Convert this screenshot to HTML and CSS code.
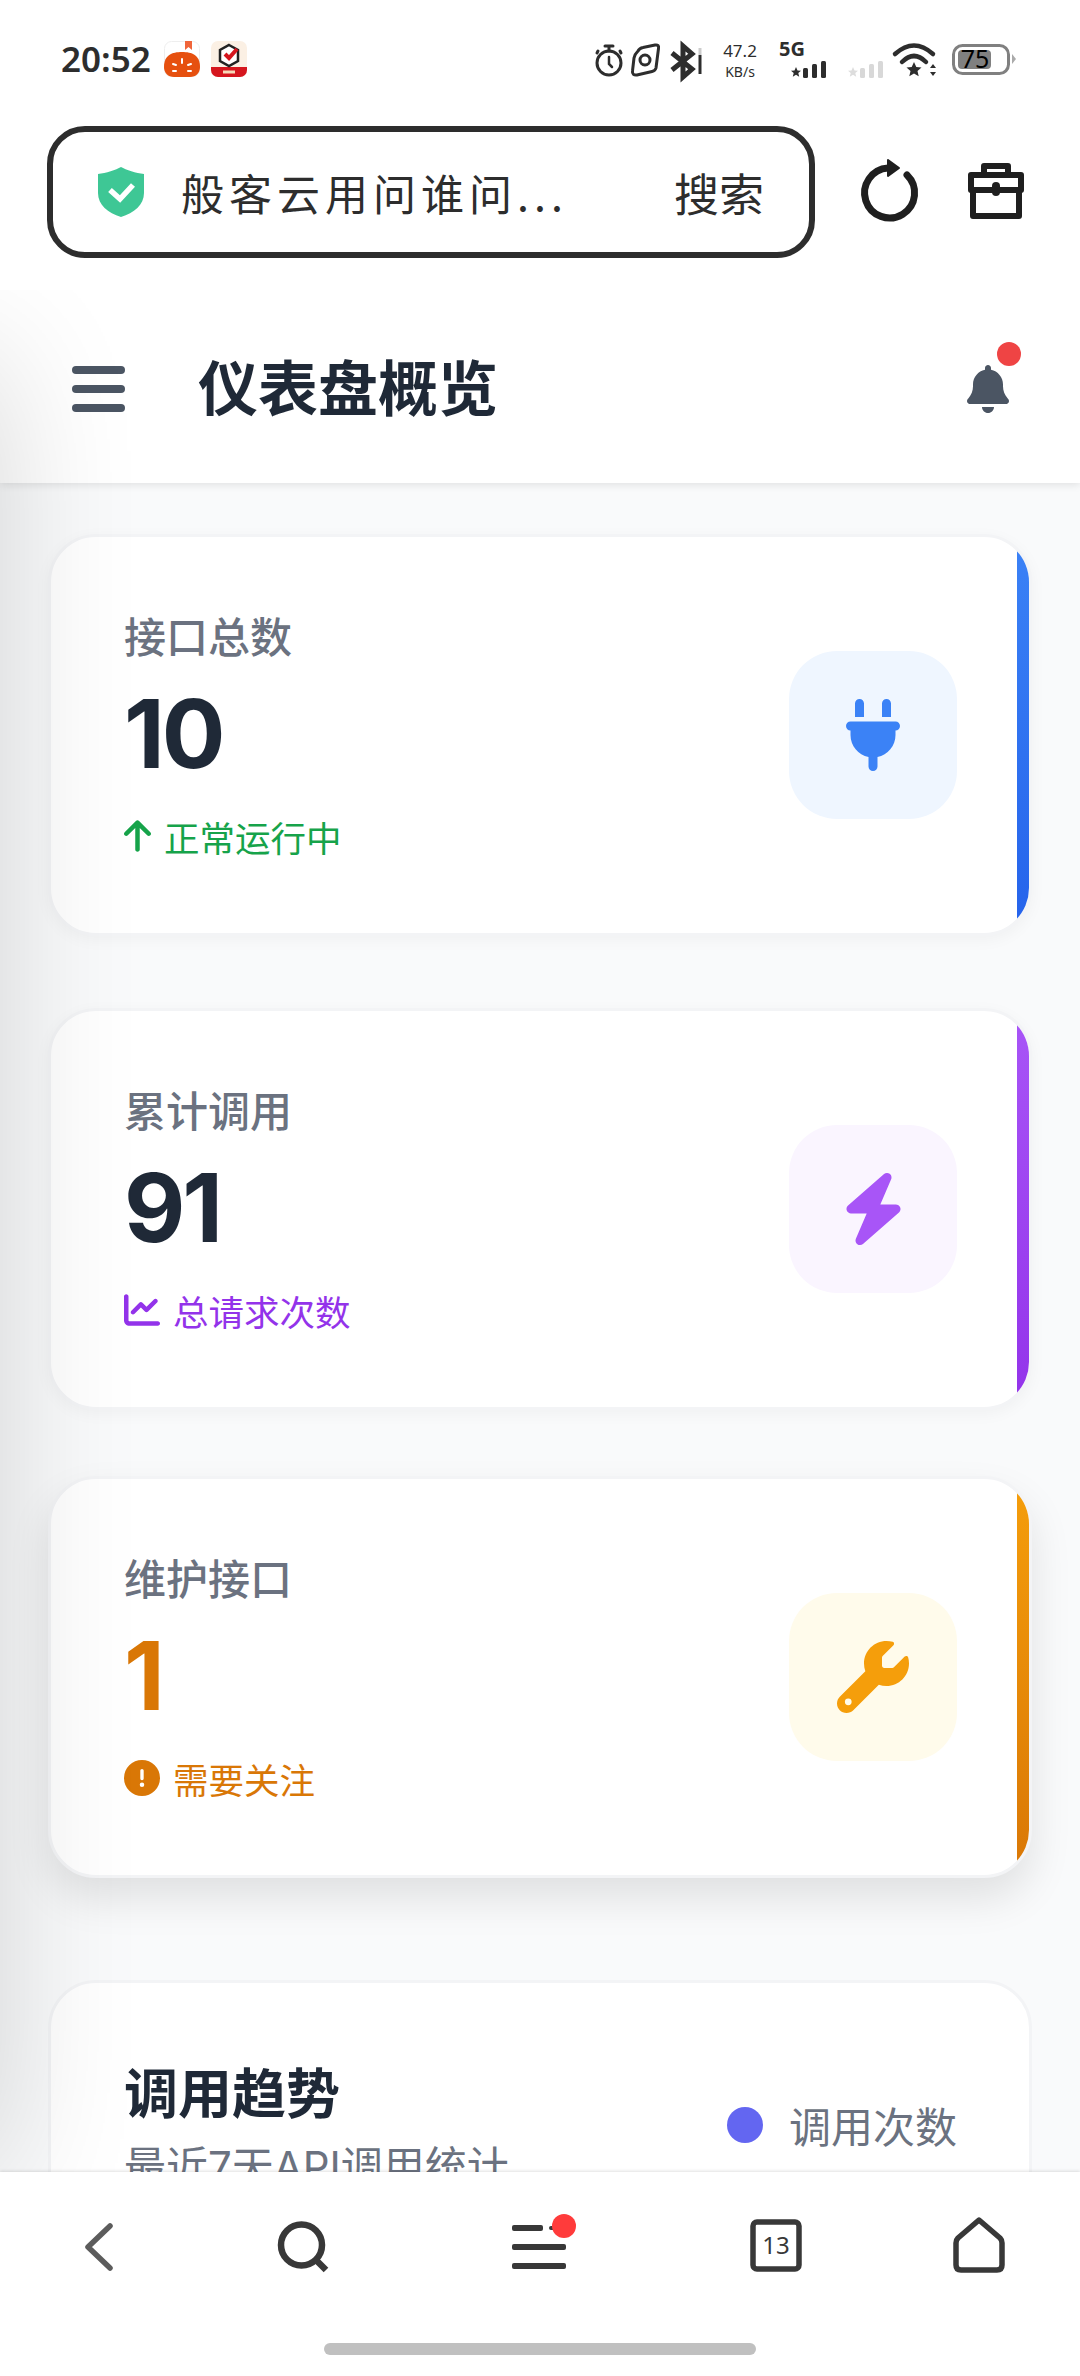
FILE: index.html
```html
<!DOCTYPE html>
<html lang="zh-CN">
<head>
    <meta charset="UTF-8">
    <meta name="viewport" content="width=device-width, initial-scale=1.0">
    <title>仪表盘概览</title>
    <link rel="stylesheet" href="styles.css">
</head>
<body>
<div class="screen">
    <!-- Status bar -->
    <div class="status-bar">
        <span class="clock">20:52</span>
        <svg class="app-icon first" viewBox="0 0 36 36">
            <rect x="0.5" y="0.5" width="35" height="35" rx="7" fill="#fff" stroke="#eee"/>
            <path d="M0 26C0 14 8 11 18 11s18 3 18 15c0 6-4 10-10 10H10C4 36 0 32 0 26z" fill="#e6500f"/>
            <path d="M21 0h7v9l-3.500-3-3.500 3z" fill="#f0653a"/>
            <path d="M9 23l3 1M18 18v4M27 23l-3 1M9 30h3M24 30h3" stroke="#fff" stroke-width="2" stroke-linecap="round"/>
        </svg>
        <svg class="app-icon" viewBox="0 0 36 36">
            <rect width="36" height="36" rx="7" fill="#fbf0e4"/>
            <path d="M0 26h36v3a7 7 0 0 1-7 7H7a7 7 0 0 1-7-7z" fill="#d5161e"/>
            <path d="M18 4l9 5v11l-9 5-9-5V9z" fill="#fff" stroke="#222" stroke-width="2.500"/>
            <path d="M14 13l4 4 8-9" fill="none" stroke="#d5161e" stroke-width="4"/>
            <path d="M12 31h12" stroke="#f6d9b8" stroke-width="3"/>
        </svg>

        <div class="status-right">
            <svg class="st-timer" viewBox="0 0 28 40" fill="none" stroke="#2d2d2d" stroke-width="3" stroke-linecap="round">
                <circle cx="14" cy="22" r="12"/>
                <path d="M10 5h8M14 5v5M25 10l1 2M3 10l-1 2"/>
                <path d="M14 16v7l3 3" stroke-width="2.500"/>
            </svg>
            <svg class="st-lens" viewBox="0 0 30 40" fill="none" stroke="#2d2d2d" stroke-width="3">
                <path d="M8 10c1-2 2-3 5-3.500L25 4c3-.5 4 1 3.500 3.500L26 27c-.5 2-2 3-4 3.500L7 34c-3 .5-5-1-4.500-4L4 17c.5-3 2-5 4-7z"/>
                <circle cx="15" cy="19" r="5"/>
            </svg>
            <svg class="st-bt" viewBox="0 0 31 40" fill="none" stroke="#2d2d2d" stroke-width="5">
                <path d="M1 12l20 16-9 8V5l9 8L1 29"/>
                <path d="M29 7v7" stroke="#ccc" stroke-width="3"/>
                <path d="M29 14v19" stroke-width="3"/>
            </svg>
            <div class="speed"><span>47.2</span><small>KB/s</small></div>
            <svg class="st-cell" viewBox="0 0 47 40">
                <text class="cell-label" x="0" y="15">5G</text>
                <path d="M17 26l1.500 3.500 3.500.3-2.700 2.300.9 3.600-3.200-2-3.200 2 .9-3.600-2.700-2.300 3.500-.3z" fill="#2d2d2d"/>
                <rect x="24" y="27" width="5" height="10" rx="1.500" fill="#2d2d2d"/>
                <rect x="33" y="23" width="5" height="14" rx="1.500" fill="#2d2d2d"/>
                <rect x="42" y="20" width="5" height="17" rx="1.500" fill="#2d2d2d"/>
            </svg>
            <svg class="st-cell2" viewBox="0 0 36 40">
                <path d="M6 26l1.500 3.500 3.500.3-2.700 2.300.9 3.600-3.200-2-3.200 2 .9-3.600-2.700-2.300 3.500-.3z" fill="#ddd"/>
                <rect x="13" y="27" width="5" height="10" rx="1.500" fill="#d8d8d8"/>
                <rect x="22" y="23" width="5" height="14" rx="1.500" fill="#d8d8d8"/>
                <rect x="31" y="20" width="5" height="17" rx="1.500" fill="#d8d8d8"/>
            </svg>
            <svg class="st-wifi" viewBox="0 0 44 40" fill="none" stroke="#2d2d2d" stroke-width="4.500" stroke-linecap="round">
                <path d="M2 13Q21-4 40 13"/>
                <path d="M9 21Q21 9 33 21"/>
                <path d="M21 21l2.300 5 5.200.5-4 3.500 1.200 5.300-4.700-2.800-4.700 2.800 1.200-5.300-4-3.500 5.200-.5z" fill="#2d2d2d" stroke="none"/>
                <path d="M37 27l3-4 3 4zM37 31l3 4 3-4z" fill="#2d2d2d" stroke="none"/>
            </svg>
            <svg class="st-battery" viewBox="0 0 64 40">
                <rect x="1.500" y="4.500" width="55" height="28" rx="9" fill="none" stroke="#808080" stroke-width="3"/>
                <rect x="6" y="9" width="33" height="19" rx="4" fill="#808080"/>
                <text class="battery-level" x="23" y="27">75</text>
                <path d="M60 13l4 5-4 5z" fill="#aaa"/>
            </svg>
        </div>
    </div>

    <!-- Browser address row -->
    <div class="browser-row">
        <div class="address-box">
            <svg class="shield" viewBox="0 0 46 50">
                <path d="M23 0c5 3 15 6 23 7v19c0 12-10 20-23 24C10 46 0 38 0 26V7c8-1 18-4 23-7z" fill="#3ec795"/>
                <path d="M12 23l10 9 13-14" fill="none" stroke="#fff" stroke-width="5.500"/>
            </svg>
            <span class="address-text">般客云用问谁问...</span>
            <span class="address-go">搜索</span>
        </div>
        <svg class="tool-refresh" viewBox="0 0 64 72" fill="none" stroke="#1f1f1f" stroke-width="7">
            <path d="M51 17A25 25 0 1 1 32 10" stroke-linecap="round"/>
            <path d="M32 2l11 8-11 8z" fill="#1f1f1f" stroke-width="2" stroke-linejoin="round"/>
        </svg>
        <svg class="tool-box" viewBox="0 0 60 60" fill="none" stroke="#1f1f1f" stroke-width="6" stroke-linejoin="round">
            <path d="M5 14h50v15H5z"/>
            <path d="M7 29v26h46V29"/>
            <path d="M18 14V5h24v9"/>
            <path d="M30 25v6" stroke-width="8" stroke-linecap="round"/>
        </svg>
    </div>

    <div class="page">
        <header class="page-header">
            <div class="menu-btn"><span></span><span></span><span></span></div>
            <h1 class="page-title">仪表盘概览</h1>
            <div class="bell">
                <svg viewBox="0 0 448 512"><path d="M224 0c-17.700 0-32 14.300-32 32V51.200C119 66 64 130.600 64 208v18.800c0 47-17.300 92.400-48.500 127.600l-7.400 8.300c-8.400 9.400-10.400 22.900-5.300 34.400S19.400 416 32 416H416c12.600 0 24-7.400 29.200-18.900s3.100-25-5.300-34.400l-7.400-8.300C401.300 319.200 384 273.900 384 226.800V208c0-77.400-55-142-128-156.800V32c0-17.700-14.300-32-32-32zm45.300 493.300c12-12 18.700-28.300 18.700-45.300H224 160c0 17 6.700 33.300 18.700 45.300s28.300 18.700 45.300 18.700s33.300-6.700 45.300-18.700z"/></svg>
                <i class="bell-dot"></i>
            </div>
        </header>

        <main class="content">
            <!-- Stat cards -->
            <section class="stat-card blue">
                <div class="stat-info">
                    <div class="stat-label">接口总数</div>
                    <div class="stat-value">10</div>
                    <div class="stat-note">
                        <svg class="note-arrow" viewBox="0 0 384 512"><path d="M214.600 41.400c-12.500-12.500-32.800-12.500-45.300 0l-160 160c-12.500 12.500-12.500 32.800 0 45.300s32.800 12.500 45.300 0L160 141.200V448c0 17.700 14.300 32 32 32s32-14.300 32-32V141.200L329.400 246.600c12.500 12.500 32.800 12.500 45.300 0s12.500-32.800 0-45.300l-160-160z"/></svg>
                        正常运行中
                    </div>
                </div>
                <div class="stat-icon">
                    <svg class="plug" viewBox="0 0 384 512"><path d="M96 0C78.300 0 64 14.300 64 32v96h64V32c0-17.700-14.300-32-32-32zM288 0c-17.700 0-32 14.300-32 32v96h64V32c0-17.700-14.300-32-32-32zM32 160c-17.700 0-32 14.300-32 32s14.300 32 32 32v32c0 77.400 55 142 128 156.800V480c0 17.700 14.300 32 32 32s32-14.300 32-32V412.800C297 398 352 333.400 352 256V224c17.700 0 32-14.300 32-32s-14.300-32-32-32H32z"/></svg>
                </div>
            </section>

            <section class="stat-card purple">
                <div class="stat-info">
                    <div class="stat-label">累计调用</div>
                    <div class="stat-value">91</div>
                    <div class="stat-note">
                        <svg class="note-icon" viewBox="0 0 512 512"><path d="M64 64c0-17.700-14.300-32-32-32S0 46.300 0 64V400c0 44.200 35.800 80 80 80H480c17.700 0 32-14.300 32-32s-14.300-32-32-32H80c-8.800 0-16-7.200-16-16V64zm406.600 86.600c12.500-12.500 12.500-32.800 0-45.300s-32.800-12.500-45.300 0L320 210.700l-57.400-57.400c-12.500-12.500-32.800-12.500-45.300 0l-112 112c-12.500 12.500-12.500 32.800 0 45.300s32.800 12.500 45.300 0L240 221.300l57.400 57.400c12.500 12.500 32.800 12.500 45.300 0l128-128z"/></svg>
                        总请求次数
                    </div>
                </div>
                <div class="stat-icon">
                    <svg class="bolt" viewBox="0 0 448 512"><path d="M349.400 44.600c5.900-13.700 1.500-29.700-10.600-38.500s-28.600-8-39.900 1.800l-256 224c-10 8.800-13.600 22.900-8.900 35.300S50.700 288 64 288H175.500L98.600 467.400c-5.900 13.700-1.500 29.700 10.600 38.500s28.600 8 39.900-1.800l256-224c10-8.800 13.600-22.900 8.900-35.300s-18.100-20.700-31.400-20.700H272.500L349.400 44.600z"/></svg>
                </div>
            </section>

            <section class="stat-card amber raised">
                <div class="stat-info">
                    <div class="stat-label">维护接口</div>
                    <div class="stat-value">1</div>
                    <div class="stat-note">
                        <svg class="note-icon" viewBox="0 0 512 512"><path d="M256 512A256 256 0 1 0 256 0a256 256 0 1 0 0 512zm0-384c13.300 0 24 10.700 24 24V264c0 13.300-10.700 24-24 24s-24-10.700-24-24V152c0-13.300 10.700-24 24-24zM224 352a32 32 0 1 1 64 0 32 32 0 1 1 -64 0z"/></svg>
                        需要关注
                    </div>
                </div>
                <div class="stat-icon">
                    <svg class="wrench" viewBox="0 0 512 512"><path d="M352 320c88.400 0 160-71.600 160-160c0-15.300-2.200-30.100-6.200-44.200c-3.100-10.800-16.400-13.200-24.300-5.300l-76.800 76.800c-3 3-7.100 4.700-11.300 4.700H336c-8.800 0-16-7.200-16-16V118.600c0-4.200 1.700-8.300 4.700-11.300l76.800-76.800c7.900-7.900 5.400-21.200-5.300-24.300C382.100 2.200 367.300 0 352 0C263.600 0 192 71.600 192 160c0 19.100 3.400 37.500 9.500 54.500L19.900 396.100C7.200 408.800 0 426.100 0 444.100C0 481.600 30.400 512 67.900 512c18 0 35.300-7.200 48-19.900L297.500 310.500c17 6.200 35.400 9.500 54.500 9.500zM80 408a24 24 0 1 1 0 48 24 24 0 1 1 0-48z"/></svg>
                </div>
            </section>

            <!-- Trend chart -->
            <section class="chart-card">
                <div class="chart-head">
                    <div>
                        <h2 class="chart-title">调用趋势</h2>
                        <div class="chart-sub">最近7天API调用统计</div>
                    </div>
                    <div class="legend"><i class="legend-dot"></i>调用次数</div>
                </div>
            </section>
        </main>

        <!-- Closed side drawer, only its shadow shows -->
        <div class="drawer"></div>
    </div>

    <!-- Browser bottom bar -->
    <nav class="bottom-bar">
        <div class="bar-icons">
            <svg viewBox="0 0 60 60" fill="none" stroke="#5c5c5c" stroke-width="5.500" stroke-linecap="round" stroke-linejoin="round"><path d="M41 11L19 32l22 21"/></svg>
            <svg viewBox="0 0 60 60" fill="none" stroke="#383838" stroke-width="6.500"><circle cx="29.500" cy="30" r="20.500"/><path d="M43 44l11 11"/></svg>
            <svg class="bar-menu" viewBox="0 0 60 60" fill="#383838">
                <rect x="3" y="10" width="31" height="6" rx="2"/>
                <rect x="40" y="11" width="17" height="4" rx="2"/>
                <rect x="3" y="29" width="54" height="6" rx="2"/>
                <rect x="3" y="48" width="54" height="6" rx="2"/>
                <circle cx="55" cy="11" r="12" fill="#ff3b3b"/>
            </svg>
            <svg viewBox="0 0 60 60" fill="none" stroke="#383838" stroke-width="5.500">
                <rect x="7" y="7" width="46" height="47" rx="4"/>
                <text class="tab-count" x="30" y="39">13</text>
            </svg>
            <svg viewBox="0 0 60 60" fill="none" stroke="#383838" stroke-width="5.500" stroke-linejoin="round"><path d="M30 5l21 18q2 2 2 5v22q0 5-5 5H12q-5 0-5-5V28q0-3 2-5z"/></svg>
        </div>
        <div class="home-bar"></div>
    </nav>
</div>
</body>
</html>
```
FILE: styles.css
```css
* {
    box-sizing: border-box;
}
body {
    margin: 0;
    background: #fff;
    font-family: Inter, "Noto Sans CJK SC", sans-serif;
}
svg {
    display: block;
    flex-shrink: 0;
}
.screen {
    width: 1080px;
    height: 2376px;
    display: flex;
    flex-direction: column;
    overflow: hidden;
    background: #fff;
}

/* Status bar */
.status-bar {
    height: 126px;
    flex-shrink: 0;
    display: flex;
    padding: 41px 64px 0 61px;
    color: #2d2d2d;
}
.clock {
    width: 103px;
    font-family: "Noto Sans", sans-serif;
    font-size: 35px;
    font-weight: 600;
    line-height: 36px;
}
.app-icon {
    width: 36px;
    height: 36px;
    margin-left: 11px;
}
.app-icon.first {
    margin-left: 0;
}
.status-right {
    margin-left: auto;
    display: flex;
    height: 40px;
}
.status-right svg {
    height: 40px;
    overflow: visible;
}
.st-timer { width: 28px; }
.st-lens { width: 30px; margin-left: 7px; }
.st-bt { width: 31px; margin-left: 11px; }
.speed {
    width: 36px;
    margin-left: 20px;
    display: flex;
    flex-direction: column;
    align-items: center;
    font-family: "Noto Sans", sans-serif;
    font-size: 17px;
    line-height: 20px;
}
.speed small {
    font-size: 14px;
    margin-top: 4px;
    line-height: 14px;
}
.st-cell { width: 47px; margin-left: 21px; }
.st-cell2 { width: 36px; margin-left: 21px; }
.st-wifi { width: 44px; margin-left: 10px; }
.st-battery { width: 64px; margin-left: 15px; }
.cell-label {
    font-family: "Noto Sans", sans-serif;
    font-size: 20px;
    font-weight: 700;
    fill: #2d2d2d;
}
.battery-level {
    font-family: "Noto Sans", sans-serif;
    font-size: 25px;
    text-anchor: middle;
    fill: #000;
}

/* Address row */
.browser-row {
    height: 164px;
    flex-shrink: 0;
    display: flex;
    align-items: flex-start;
    padding-left: 47px;
}
.address-box {
    width: 768px;
    height: 132px;
    display: flex;
    align-items: center;
    padding: 0 45px;
    border: 6px solid #2d2d2d;
    border-radius: 38px;
    color: #2d2d2d;
    font-family: "Noto Sans CJK SC", sans-serif;
    font-size: 43px;
}
.shield {
    width: 46px;
    height: 50px;
}
.address-text {
    margin-left: 37px;
    letter-spacing: 5px;
}
.address-go {
    margin-left: auto;
    font-size: 45px;
}
.tool-refresh {
    width: 64px;
    height: 72px;
    margin: 32px 0 0 41px;
}
.tool-box {
    width: 60px;
    height: 60px;
    margin: 35px 0 0 46px;
}

/* Page */
.page {
    flex: 1;
    position: relative;
    overflow: hidden;
    background: #f9fafb;
}
.page-header {
    height: 193px;
    display: flex;
    align-items: center;
    padding: 4px 72px 0;
    background: #fff;
    box-shadow: 0 2px 8px rgba(0, 0, 0, 0.1);
    position: relative;
}
.menu-btn {
    width: 53px;
    display: flex;
    flex-direction: column;
    gap: 11px;
}
.menu-btn span {
    height: 8px;
    border-radius: 4px;
    background: #4b5563;
}
.page-title {
    margin: 0 0 8px 73px;
    font-size: 60px;
    font-weight: 700;
    color: #1f2937;
}
.bell {
    margin-left: auto;
    margin-right: -1px;
    position: relative;
}
.bell svg {
    width: 42px;
    height: 48px;
    fill: #4b5563;
}
.bell-dot {
    position: absolute;
    right: -12px;
    top: -23px;
    width: 24px;
    height: 24px;
    border-radius: 50%;
    background: #ef4444;
}

.content {
    padding: 51px 48px 0;
    display: flex;
    flex-direction: column;
    gap: 72px;
}
.stat-card {
    height: 402px;
    flex-shrink: 0;
    position: relative;
    overflow: hidden;
    display: flex;
    justify-content: space-between;
    align-items: center;
    padding: 0 72px 0 73px;
    background: #fff;
    border: 3px solid #f3f4f6;
    border-radius: 48px;
    box-shadow: 0 4px 16px rgba(0, 0, 0, 0.04);
}
.stat-card::after {
    content: "";
    position: absolute;
    top: 0;
    right: 0;
    bottom: 0;
    width: 12px;
}
.stat-card.raised {
    transform: translateY(-6px);
    box-shadow: 0 21px 42px rgba(0, 0, 0, 0.1);
}
.stat-label {
    padding-top: 2px;
    font-size: 42px;
    font-weight: 500;
    line-height: 57px;
    color: #6b7280;
}
.stat-value {
    margin-top: 21px;
    font-size: 94.5px;
    font-weight: 700;
    line-height: 94px;
    letter-spacing: -3px;
    color: #1f2937;
}
.stat-note {
    margin-top: 28px;
    height: 55px;
    display: flex;
    align-items: center;
    gap: 13px;
    font-size: 35.5px;
}
.note-arrow {
    width: 27px;
    height: 36px;
    fill: currentColor;
}
.note-icon {
    width: 36px;
    height: 36px;
    fill: currentColor;
}
.stat-icon {
    width: 168px;
    height: 168px;
    display: flex;
    align-items: center;
    justify-content: center;
    border-radius: 48px;
}
.stat-icon svg {
    height: 72px;
}
.plug { width: 54px; }
.bolt { width: 63px; }
.wrench { width: 72px; }

.blue::after { background: linear-gradient(180deg, #3b82f6, #2563eb); }
.blue .stat-note { color: #16a34a; }
.blue .stat-icon { background: #eff6ff; }
.blue .stat-icon svg { fill: #3b82f6; }

.purple::after { background: linear-gradient(180deg, #a855f7, #9333ea); }
.purple .stat-note { color: #9333ea; }
.purple .stat-icon { background: #faf5ff; }
.purple .stat-icon svg { fill: #a855f7; }

.amber::after { background: linear-gradient(180deg, #f59e0b, #d97706); }
.amber .stat-value,
.amber .stat-note { color: #d97706; }
.amber .stat-icon { background: #fffbeb; }
.amber .stat-icon svg { fill: #f59e0b; }

.chart-card {
    margin-top: 24px;
    height: 800px;
    flex-shrink: 0;
    padding: 80px 72px 0 73px;
    background: #fff;
    border: 3px solid #f3f4f6;
    border-radius: 48px;
}
.chart-head {
    display: flex;
    justify-content: space-between;
    align-items: center;
}
.chart-title {
    margin: 0;
    font-size: 54px;
    font-weight: 700;
    line-height: 63px;
    color: #1f2937;
}
.chart-sub {
    margin-top: 13px;
    font-size: 42px;
    line-height: 55px;
    color: #6b7280;
}
.legend {
    margin-bottom: 8px;
    display: flex;
    align-items: center;
    gap: 26px;
    font-size: 42px;
    color: #6b7280;
}
.legend-dot {
    width: 36px;
    height: 36px;
    border-radius: 50%;
    background: #6366f1;
}

.drawer {
    position: absolute;
    top: 70px;
    bottom: 0;
    right: 100%;
    width: 600px;
    box-shadow: 0 0 130px rgba(0, 0, 0, 0.16);
}

/* Bottom bar */
.bottom-bar {
    height: 204px;
    flex-shrink: 0;
    position: relative;
    padding-top: 43px;
    background: #fff;
    box-shadow: 0 -1px 3px rgba(0, 0, 0, 0.12);
}
.bar-icons {
    display: grid;
    grid-template-columns: 203px 237px 237px 203px 60px;
    padding-left: 69px;
}
.bar-icons svg {
    width: 60px;
    height: 60px;
    overflow: visible;
}
.tab-count {
    font-family: "Noto Sans", sans-serif;
    font-size: 24px;
    text-anchor: middle;
    fill: #383838;
    stroke: none;
}
.home-bar {
    width: 432px;
    height: 12px;
    margin: 68px auto 0;
    border-radius: 6px;
    background: #c0c0c0;
}
```
